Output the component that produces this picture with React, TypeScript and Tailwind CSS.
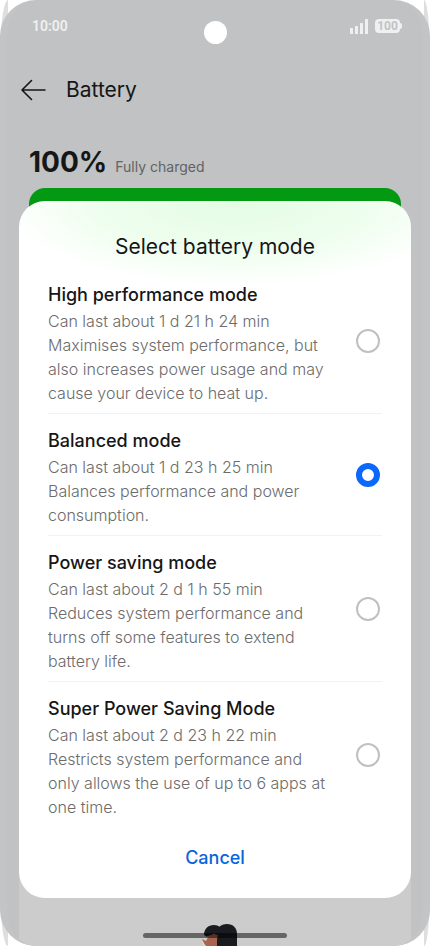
import { useState } from 'react';

interface BatteryMode {
  id: string;
  name: string;
  duration: string;
  description: string;
}

const MODES: BatteryMode[] = [
  {
    id: 'high',
    name: 'High performance mode',
    duration: 'Can last about 1 d 21 h 24 min',
    description:
      'Maximises system performance, but also increases power usage and may cause your device to heat up.',
  },
  {
    id: 'balanced',
    name: 'Balanced mode',
    duration: 'Can last about 1 d 23 h 25 min',
    description: 'Balances performance and power consumption.',
  },
  {
    id: 'saving',
    name: 'Power saving mode',
    duration: 'Can last about 2 d 1 h 55 min',
    description: 'Reduces system performance and turns off some features to extend battery life.',
  },
  {
    id: 'super',
    name: 'Super Power Saving Mode',
    duration: 'Can last about 2 d 23 h 22 min',
    description:
      'Restricts system performance and only allows the use of up to 6 apps at one time.',
  },
];

function StatusBar() {
  return (
    <div className="flex h-[52px] items-center justify-between pl-8 pr-7 text-[#f0f0f0]">
      <span className="font-[Roboto,sans-serif] text-sm font-semibold">10:00</span>
      <div className="flex items-center gap-1.5">
        <svg width="19" height="15" viewBox="0 0 19 15" fill="currentColor" aria-hidden="true">
          <rect x="0" y="9" width="3" height="6" rx="0.5" />
          <rect x="5" y="7" width="3" height="8" rx="0.5" />
          <rect x="10" y="4" width="3" height="11" rx="0.5" />
          <rect x="15" y="0" width="3" height="15" rx="0.5" />
        </svg>
        <div className="flex items-center">
          <span className="flex h-3.5 w-[25px] items-center justify-center rounded-[4px] bg-[#f0f0f0] font-[Roboto,sans-serif] text-xs font-bold text-[#c1c3c4]">
            100
          </span>
          <span className="h-1.5 w-0.5 rounded-r-sm bg-[#f0f0f0]" />
        </div>
      </div>
    </div>
  );
}

function ModeRow({
  mode,
  checked,
  onSelect,
}: {
  mode: BatteryMode;
  checked: boolean;
  onSelect: () => void;
}) {
  return (
    <label
      htmlFor={mode.id}
      className="flex items-center border-b border-[#f2f2f2] last:border-b-0"
    >
      <span className="flex-1 pt-[13px] pr-6 pb-2">
        <span className="block text-lg leading-7 font-medium text-[#161616]">{mode.name}</span>
        <span className="block text-base leading-6 font-light text-[#6c6c6c]">{mode.duration}</span>
        <span className="block text-base leading-6 font-light text-[#6c6c6c]">
          {mode.description}
        </span>
      </span>
      <input
        id={mode.id}
        type="radio"
        name="battery-mode"
        checked={checked}
        onChange={onSelect}
        className="mr-0.5 size-6 shrink-0 appearance-none rounded-full border-2 border-[#c0c0c0] bg-white checked:border-[6px] checked:border-[#0a68fa]"
      />
    </label>
  );
}

export default function App() {
  const [selected, setSelected] = useState('balanced');

  return (
    <div className="relative min-h-screen overflow-hidden bg-white font-[Inter,sans-serif]">
      {/* frame edges showing behind the screen corners */}
      <div className="absolute inset-y-0 left-0 w-2 rounded-l-[100%_60px] bg-[#dedede]" />
      <div className="absolute inset-y-0 right-0 w-1.5 rounded-r-[100%_60px] bg-[#dedede]" />

      <div className="relative flex min-h-screen flex-col overflow-hidden rounded-[36px] border-x-[7px] border-[#c3c4c6] bg-[#c0c2c3]">
        <div className="-mx-[7px]">
          <StatusBar />
          <header className="flex items-center gap-5 px-5 pt-6">
            <button type="button" aria-label="Back" className="text-[#161616]">
              <svg width="26" height="22" viewBox="0 0 26 22" fill="none" stroke="currentColor" strokeWidth="1.6" strokeLinecap="round" strokeLinejoin="round">
                <path d="M11.5 1.5 2 11l9.500 9.500M2 11h23" />
              </svg>
            </button>
            <h1 className="text-[21px] leading-7 text-[#161616]">Battery</h1>
          </header>

          <main className="px-[29px] pt-[38px]">
            <div className="flex items-baseline gap-2">
              <span className="text-[28px] leading-10 font-bold text-[#161616]">100%</span>
              <span className="text-sm text-[#626364]">Fully charged</span>
            </div>
            <div className="mt-1.5 h-16 rounded-2xl bg-[#039912]" />
          </main>
        </div>

        <div className="relative mx-3 mt-auto h-[84px] bg-[#cccccc]">
          <svg className="absolute bottom-0 left-[182px]" width="38" height="23" viewBox="0 0 38 23" aria-hidden="true">
            <path d="M4 23 1 16l4 2 3-6 6-2h8v13z" fill="#a86451" />
            <path d="M16 23v-6l2-13C20 2 23 1 26 1c6 0 10 4 10 10v12z" fill="#191b20" />
            <path d="M3 12C3 6 7 2 13 2c5 0 8 3 8 8l-4 2c-3 0-3-2-5-1-2 2-5 1-6 3z" fill="#191b20" />
            <path d="m0 16 5 7H2z" fill="#e2d0ca" />
          </svg>
        </div>
      </div>

      {/* camera cutout */}
      <div className="absolute inset-x-0 top-[21px] mx-auto size-[23px] rounded-full bg-white" />

      <div
        role="dialog"
        aria-labelledby="dialog-title"
        className="absolute inset-x-[19px] top-[201px] rounded-[26px] bg-white bg-[radial-gradient(ellipse_60%_85px_at_55%_0,#e3fce4,#effeef_60%,#ffffff)] px-[29px] pt-8 pb-7"
      >
        <h2 id="dialog-title" className="mb-[7px] text-center text-[21px] leading-7 text-[#161616]">
          Select battery mode
        </h2>
        <div role="radiogroup" aria-labelledby="dialog-title">
          {MODES.map((mode) => (
            <ModeRow
              key={mode.id}
              mode={mode}
              checked={selected === mode.id}
              onSelect={() => setSelected(mode.id)}
            />
          ))}
        </div>
        <div className="mt-[19px] flex justify-center">
          <button type="button" className="text-lg leading-6 font-medium text-[#0a64de]">
            Cancel
          </button>
        </div>
      </div>

      {/* gesture handle */}
      <div className="absolute inset-x-0 bottom-2 mx-auto h-[5px] w-36 rounded-full bg-black/50" />
    </div>
  );
}
